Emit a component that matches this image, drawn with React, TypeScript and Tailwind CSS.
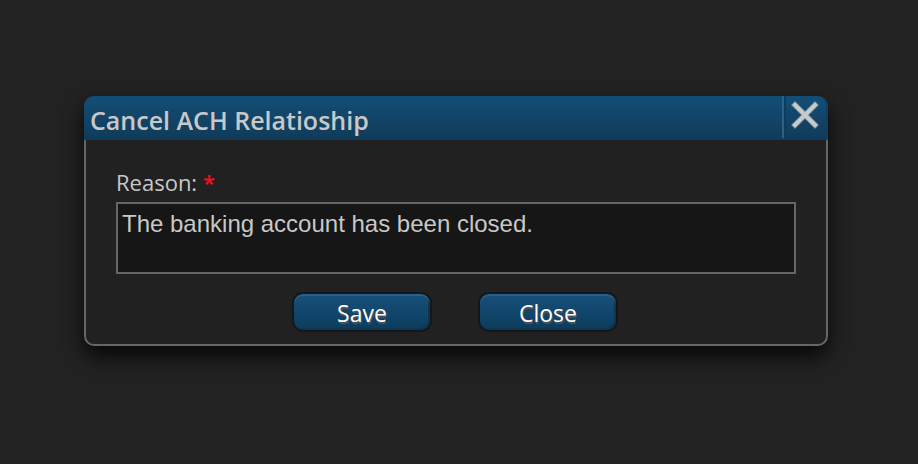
import { useState, type ReactNode } from 'react';

function DialogButton({ children }: { children: ReactNode }) {
  return (
    <button
      type="button"
      className="flex h-10 w-[140px] items-center justify-center rounded-[11px] border-2 border-[#151719] bg-gradient-to-b from-[#17507b] to-[#0c3c5e] pt-0.5 text-[23px] leading-8 text-white shadow-[inset_0_2px_0_#26608b,inset_-2px_-2px_0_#0d3653] [text-shadow:1px_2px_1px_#555]"
    >
      {children}
    </button>
  );
}

function CloseIcon() {
  return (
    <svg viewBox="0 0 28 28" className="size-7" aria-hidden="true">
      <path d="M4 4L24 24M24 4L4 24" fill="none" stroke="#6f8a9c" strokeWidth="5.6" strokeLinecap="square" strokeLinejoin="round" />
      <path d="M4 4L24 24M24 4L4 24" fill="none" stroke="#c8caca" strokeWidth="4" strokeLinecap="square" />
    </svg>
  );
}

export default function App() {
  const [reason, setReason] = useState('The banking account has been closed.');

  return (
    <main className="min-h-screen bg-[#222] pt-24 pr-[90px] pl-[84px] font-['Open_Sans','Noto_Sans',sans-serif] text-[#c8c8c8]">
      <section
        role="dialog"
        aria-labelledby="dialog-title"
        className="rounded-[10px] shadow-[0_10px_20px_rgba(0,0,0,0.8)]"
      >
        <header className="flex h-11 rounded-t-[10px] bg-gradient-to-b from-[#134e78] to-[#103b59] shadow-[inset_-2px_0_0_#103f60]">
          <h1 id="dialog-title" className="grow pt-1 pl-[6px] text-[25px] leading-10 font-semibold">
            Cancel ACH Relatioship
          </h1>
          <button
            type="button"
            aria-label="Close dialog"
            className="mb-0.5 flex w-[46px] justify-center border-l-2 border-[#2d6087] pt-[5px] pr-0.5 shadow-[inset_2px_0_0_#0e3c5b]"
          >
            <CloseIcon />
          </button>
        </header>
        <form className="rounded-b-[10px] border-2 border-t-0 border-[#666] bg-[#212121] px-[30px] pt-[26px] pb-3">
          <label htmlFor="reason" className="block text-[22px] leading-8">
            Reason: <span className="font-semibold text-[#fb0d1b]">*</span>
          </label>
          <textarea
            id="reason"
            required
            value={reason}
            onChange={(event) => setReason(event.target.value)}
            className="mt-1 block h-[72px] w-full resize-none overflow-hidden border-2 border-[#666] bg-[#161616] px-1 py-1 font-['Liberation_Sans',sans-serif] text-2xl leading-8 outline-none"
          />
          <div className="mt-[18px] flex justify-center gap-[46px] pr-0.5">
            <DialogButton>Save</DialogButton>
            <DialogButton>Close</DialogButton>
          </div>
        </form>
      </section>
    </main>
  );
}
